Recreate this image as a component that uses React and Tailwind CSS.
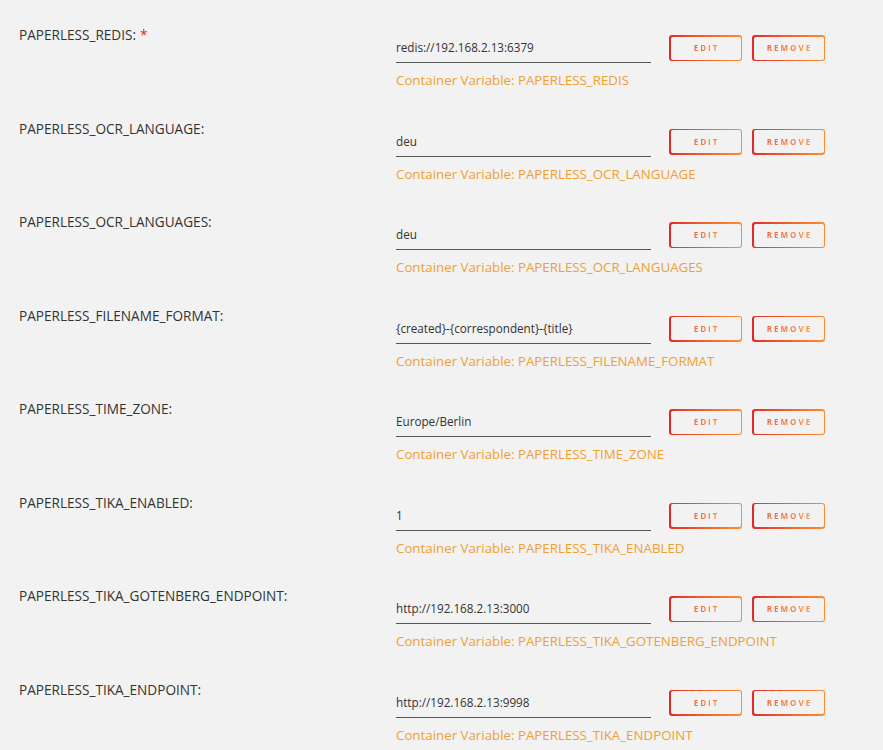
const VARS = [
  { key: 'PAPERLESS_REDIS', value: 'redis://192.168.2.13:6379', required: true },
  { key: 'PAPERLESS_OCR_LANGUAGE', value: 'deu' },
  { key: 'PAPERLESS_OCR_LANGUAGES', value: 'deu' },
  { key: 'PAPERLESS_FILENAME_FORMAT', value: '{created}-{correspondent}-{title}' },
  { key: 'PAPERLESS_TIME_ZONE', value: 'Europe/Berlin' },
  { key: 'PAPERLESS_TIKA_ENABLED', value: '1' },
  { key: 'PAPERLESS_TIKA_GOTENBERG_ENDPOINT', value: 'http://192.168.2.13:3000' },
  { key: 'PAPERLESS_TIKA_ENDPOINT', value: 'http://192.168.2.13:9998' },
]

function GradButton({ children }) {
  return (
    <button className="w-[73px] h-[26px] rounded-[3px] p-[1.5px] bg-gradient-to-r from-[#e22828] to-[#ff8c2f]">
      <span className="flex h-full w-full items-center justify-center rounded-[2px] bg-[#f2f2f2]">
        <span className="bg-gradient-to-r from-[#ec6445] to-[#ff9238] bg-clip-text text-transparent text-[8px] font-bold tracking-[2px] pl-[2px]">
          {children}
        </span>
      </span>
    </button>
  )
}

function Row({ v }) {
  return (
    <div className="flex h-[93.5px]">
      <div className="w-[396px] shrink-0 pl-[19px] text-[13.6px] leading-[14px] text-[#333]">
        {v.key}:{v.required && <span className="text-[#e22828] ml-[4px]">*</span>}
      </div>
      <div className="flex flex-col pt-[7px]">
        <div className="flex items-start">
          <div className="w-[255px] h-[28px] border-b border-[#555] flex items-center text-[11.7px] text-[#333] pb-[1px]">
            {v.value}
          </div>
          <div className="flex gap-[10px] ml-[18px]">
            <GradButton>EDIT</GradButton>
            <GradButton>REMOVE</GradButton>
          </div>
        </div>
        <div className="mt-[9px] text-[13.3px] leading-[16px] text-[#f0a030]">
          Container Variable: {v.key}
        </div>
      </div>
    </div>
  )
}

export default function App() {
  return (
    <div className="min-h-screen w-[883px] h-[750px] overflow-hidden bg-[#f2f2f2] pt-[28px]" style={{ fontFamily: '"Open Sans", "Noto Sans", sans-serif' }}>
      {VARS.map(v => <Row key={v.key} v={v} />)}
    </div>
  )
}
